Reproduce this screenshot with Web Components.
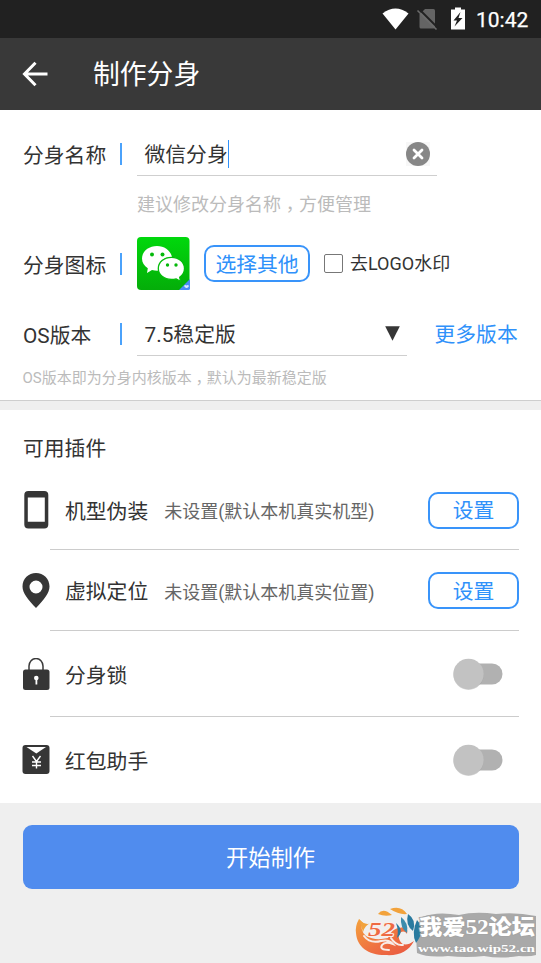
<!DOCTYPE html>
<html lang="zh-CN">
<head>
<meta charset="utf-8">
<title>制作分身</title>
<style>
html,body{margin:0;padding:0}
body{width:541px;height:963px;overflow:hidden;background:#efefef;color:#333;font-family:Roboto,"Noto Sans CJK SC",sans-serif;font-size:20.8px;line-height:1}
</style>
</head>
<body>
<clone-page></clone-page>
<script>
const define = (name, css, html) => customElements.define(name, class extends HTMLElement {
  constructor() {
    super();
    this.attachShadow({mode: 'open'}).innerHTML = `<style>*{box-sizing:border-box}svg{display:block;flex:none}:host{box-sizing:border-box;white-space:nowrap}${css}</style>${html}`;
  }
});

define('status-bar', `
:host{display:flex;height:38px;background:#212121;color:#fff;align-items:center;justify-content:flex-end;padding:0 12px 0 0}
.time{width:53px;height:22px;line-height:24px;margin-left:11px;font-size:21px;-webkit-text-stroke:.25px #fff}`, `
<svg width="84" height="38" viewBox="381 0 84 38">
<path d="M382.500 13.500Q395.500 3.500 408.500 13.500L395.500 29.500Z" fill="#fff"/>
<path d="M425 9h8.500q1.500 0 1.500 1.500V27q0 1.500-1.500 1.500H421q-1.500 0-1.500-1.500V14.500Z" fill="#646464"/>
<path d="M419.500 9.500 438 28" stroke="#212121" stroke-width="1.800"/>
<path d="M417.500 10.500 436.500 29.500" stroke="#6b6b6b" stroke-width="1.600"/>
<path d="M455 7.500h6v2h4V29.500h-14V9.500h4Z" fill="#fff"/>
<path d="M460.500 12 453.500 20.500h3.500L454.500 26.500 462.500 18h-4Z" fill="#212121"/></svg>
<span class="time">10:42</span>`);

define('title-bar', `
:host{display:flex;height:72px;background:#393939;color:#fff;align-items:center;padding-left:22px;font-size:26.8px}
span{margin-left:45px;padding-top:3px}`, `
<svg width="26" height="28" viewBox="0 0 26 28"><path d="M13.500 2.800 2.500 14 13.500 25.200M2.500 14H25.500" fill="none" stroke="#fff" stroke-width="3"/></svg>
<span><slot></slot></span>`);

define('form-row', `
:host{display:flex;align-items:center;padding-left:23px;height:44px}
.label{width:97px;padding-top:2px;height:24px;line-height:24px}
i{width:2px;height:22px;background:#4ba2fb;margin-right:15px}`, `
<span class="label"><slot name="label"></slot></span><i></i><slot></slot>`);

define('line-field', `
:host{display:flex;align-items:center;height:44px;border-bottom:1px solid #cfcfcf;padding:0 7px 0 7.500px;width:300px}
:host([narrow]){width:270px}
.grow{flex:1;display:flex;align-items:center}
:host([narrow]) .grow{padding-top:3px}`, `<span class="grow"><slot></slot></span><slot name="end"></slot>`);

define('text-caret', `:host{width:1.500px;height:28px;background:#2f91fa;display:inline-block}`, ``);

define('clear-icon', `:host{display:block}`, `
<svg width="24" height="24" viewBox="0 0 24 24"><path fill="#f7f7f7" d="M0 0h24v24H0z"/><circle cx="12" cy="12" r="12" fill="#878787"/><path d="m8 8 8 8m0-8-8 8" stroke="#fff" stroke-width="2.800" stroke-linecap="round"/></svg>`);

define('drop-arrow', `:host{display:block}`, `<svg width="15" height="15" viewBox="0 0 15 15"><path d="M.2.300h14.600L7.500 14.700Z" fill="#363636"/></svg>`);

define('hint-text', `:host{display:flex;align-items:center;color:#bbb;font-size:18px}`, `<span><slot></slot></span>`);
define('mid-comma', `:host{display:inline;font-family:"Noto Sans CJK TC",sans-serif;position:relative;top:.3em}`, `<slot></slot>`);

define('wechat-icon', `:host{display:block;width:53px;height:53px}`, `
<svg width="53" height="53" viewBox="0 0 53 53">
<defs><linearGradient id="g" x2="0" y2="1"><stop stop-color="#00d80c"/><stop offset="1" stop-color="#04ad09"/></linearGradient></defs>
<rect width="52.500" height="53" rx="4" fill="url(#g)"/>
<path d="M20 9C11.500 9 5 14.500 5 21.500c0 4 2.200 7.400 5.800 9.800L10 36l5-3c2.500.6 4.500.900 7.500.600A13 13 0 0 1 22 30c0-6 5.500-10 13-10C33.500 13.500 27.500 9 20 9Z" fill="#fff"/>
<circle cx="15" cy="17.500" r="2" fill="#04b90a"/><circle cx="25.500" cy="17.500" r="2" fill="#04b90a"/>
<path d="M34.500 20.300C27 20.300 21.300 25.200 21.300 31.500S27 42.500 34.500 42.500c1.700 0 3.300-.200 4.700-.600l4.300 2.300-.800-4c3-2 4.800-5.200 4.800-8.700 0-6.300-5.700-11.200-13-11.200Z" fill="#fff" stroke="#04bd0a" stroke-width="1.300"/>
<circle cx="30.500" cy="28" r="1.700" fill="#04b90a"/><circle cx="39" cy="28" r="1.700" fill="#04b90a"/>
<path d="M42 53 53 42v9.500Q53 53 51.500 53Z" fill="#4a8cf5"/><path d="M47 48.700q1.500-1.300 2.500-.3 1.500-1.200 2.500.6-1 2.300-2.700 2-1.700-.2-2.300-2.300Z" fill="#d8e6ff"/></svg>`);

define('outline-button', `
:host{display:flex;align-items:center;justify-content:center;width:91px;height:37px;border:2px solid #3994fa;border-radius:10px;color:#2f91fa;flex:none}
:host([wide]){width:106px}
span{padding-top:3px}`, `<span><slot></slot></span>`);

define('check-option', `
:host{display:flex;align-items:center;font-size:18px;height:24px}
b{width:19px;height:19px;border:1.500px solid #777;border-radius:2px;margin-right:7px}`, `<b></b><span><slot></slot></span>`);

define('plugin-row', `
:host{display:flex;height:86px;align-items:center;padding:0 22px;position:relative}
:host([compact]){height:81px}
:host([first]){height:80px}
:host([line])::after{content:"";position:absolute;left:50px;right:22px;bottom:0;height:1px;background:#ccc}
.icon{width:28px;display:flex;justify-content:center;margin-right:15px}
.name{padding-top:4px}
.note{font-size:18px;color:#666;margin-left:16px;padding-top:4px;flex:1}`, `
<span class="icon"><slot name="icon"></slot></span><span class="name"><slot name="name"></slot></span><span class="note"><slot name="note"></slot></span><slot name="control"></slot>`);

define('phone-icon', `:host{display:block}`, `<svg width="26" height="38" viewBox="-1.300 0 26 38"><path fill-rule="evenodd" d="M4 0h16q4 0 4 4v29.500q0 4-4 4H4q-4 0-4-4V4Q0 0 4 0ZM3.500 6.500v24.300h17V6.500Z" fill="#363636"/></svg>`);
define('pin-icon', `:host{display:block}`, `<svg width="28" height="36" viewBox="0 0.500 28 36"><path fill-rule="evenodd" d="M14 .5C6.500.5.500 6.200.500 14c0 6.500 5.500 13 13.500 21.500C22 27 27.500 20.500 27.500 14 27.500 6.200 21.500.5 14 .5ZM14 8a6.500 6.500 0 1 1 0 13 6.500 6.500 0 0 1 0-13Z" fill="#363636"/></svg>`);
define('lock-icon', `:host{display:block}`, `<svg width="28" height="33" viewBox="0 0.500 28 33"><path d="M7 14V8.500a7 7.500 0 0 1 14 0V14" fill="none" stroke="#3a3a3a" stroke-width="1.500"/><rect x="1" y="12" width="26.500" height="20.500" rx="2.500" fill="#363636"/><circle cx="14.300" cy="20.500" r="2.300" fill="#fff"/><path d="M13.500 21h1.800v6h-1.800z" fill="#fff"/></svg>`);
define('packet-icon', `:host{display:block}`, `<svg width="28" height="31" viewBox="0 0 28 31"><rect x=".5" width="27" height="29" rx="3" fill="#363636"/><path d="M4.500 2h19.500L14.300 8.500Z" fill="#fff"/><path d="m10.500 11 4 5.500 4-5.500M10 17h9M10 20.500h9M14.500 16v7.500" fill="none" stroke="#fff" stroke-width="1.400"/></svg>`);

define('toggle-switch', `
:host{display:block;width:50px;height:34px;margin-right:16.500px}
svg{overflow:visible}`, `
<svg width="50" height="34" viewBox="0 0 50 34"><rect x="10" y="6.500" width="39.500" height="21" rx="10.500" fill="#b1b1b1"/><circle cx="15.500" cy="18" r="15" fill="#888" opacity=".35"/><circle cx="15.500" cy="17" r="15.200" fill="#c2c2c2"/></svg>`);

define('forum-mark', `
:host{position:absolute;left:354px;top:903px;width:187px;height:60px}
text{paint-order:stroke;stroke:#a5a5a5;stroke-linejoin:round;fill:#fff}`, `
<svg width="187" height="60" viewBox="0 0 187 60">
<defs><linearGradient id="o" x2="1" y2="1"><stop stop-color="#f4a23c"/><stop offset=".55" stop-color="#ef7141"/><stop offset="1" stop-color="#e85541"/></linearGradient></defs>
<path d="M68 14q15-6 37-2 16-4 37-1 20-2 40 2v39q-6 2-17 1-18 3-35 0-17 2-36 0-20 2-31-3l-1-17 7-5Z" fill="#a9a9a9"/>
<path d="M5 16Q1 23 2 30C3 44 14 52 31 52C45 53 54 49 60 38Q50 45 46 38C42 31 49 25 53 31Q55 22 45 25C38 26 36 31 34 35Q21 38 12 33Q5 26 9 20Z" fill="url(#o)"/>
<path d="M10 33Q16 41 27 38 35 36 39 41 31 38 28 42 25 47 35 47M37 35Q42 43 49 42" fill="none" stroke="#f8ece8" stroke-width="2" stroke-linecap="round"/>
<path d="M24 11Q29 4 38 12 31 14 24 11ZM36 6Q47 2 53 11 45 12 36 6ZM5 16Q11 23 17 20 11 22 9 29Z" fill="#f2a23b"/>
<path d="M54 11Q63 17 59 28 51 22 54 11ZM63 17Q72 27 62 40 57 30 63 17ZM42 20Q51 28 43 35 45 28 42 20Z" fill="#297a9f"/>
<path d="M47 14Q55 20 53 30 46 25 47 14Z" fill="#3c8cad"/>
<text x="14" y="33" font-family="Liberation Serif" font-size="19" font-weight="700" font-style="italic" textLength="27" lengthAdjust="spacingAndGlyphs" style="fill:#ee6a42;stroke:#fbeee9;stroke-width:1.800">52</text>
<text x="65" y="31" font-family="Liberation Serif,Noto Sans CJK SC,serif" font-size="21" font-weight="900" textLength="116" lengthAdjust="spacingAndGlyphs" stroke-width="2">我爱52论坛</text>
<text x="64" y="48.500" font-family="Liberation Serif,serif" font-size="11" font-weight="700" textLength="117" lengthAdjust="spacingAndGlyphs" stroke-width="1">www.tao.wip52.cn</text></svg>`);

define('primary-button', `
:host{display:flex;align-items:center;justify-content:center;height:63.500px;margin:22px 22.500px 0;background:#508cee;border-radius:9px;color:#fff;font-size:22.300px}
span{padding-top:2px}`, `<span><slot></slot></span>`);

define('clone-page', `
:host{display:block;width:541px;height:963px;position:relative;background:#efefef}
section{background:#fff}
.form{height:291px;padding-top:22px;border-bottom:1px solid #cecece}
.field-value{padding-top:3px}
.name-hint{height:54px;padding:1px 0 0 137px}
.icon-row{height:67px;align-items:center}
.os-hint{height:43px;padding-left:22.500px;font-size:15px}
.plugins{margin-top:9px;height:393px}
h2{margin:0;height:60px;padding:29px 0 0 23px;font-size:20.800px;font-weight:400}
outline-button[wide]{margin:0 14px}
.more{color:#2f91fa;margin-left:27.500px;padding-top:3px}`, `
<status-bar></status-bar>
<title-bar>制作分身</title-bar>
<section class="form">
<form-row><span slot="label">分身名称</span><line-field><span class="field-value">微信分身</span><text-caret></text-caret><clear-icon slot="end"></clear-icon></line-field></form-row>
<hint-text class="name-hint">建议修改分身名称<mid-comma lang="zh-TW">，</mid-comma>方便管理</hint-text>
<form-row class="icon-row"><span slot="label">分身图标</span><wechat-icon></wechat-icon><outline-button wide>选择其他</outline-button><check-option>去LOGO水印</check-option></form-row>
<form-row style="margin-top:15px"><span slot="label">OS版本</span><line-field narrow>7.5稳定版<drop-arrow slot="end"></drop-arrow></line-field><span class="more">更多版本</span></form-row>
<hint-text class="os-hint">OS版本即为分身内核版本<mid-comma lang="zh-TW">，</mid-comma>默认为最新稳定版</hint-text>
</section>
<section class="plugins">
<h2>可用插件</h2>
<plugin-row first line><phone-icon slot="icon"></phone-icon><span slot="name">机型伪装</span><span slot="note">未设置(默认本机真实机型)</span><outline-button slot="control">设置</outline-button></plugin-row>
<plugin-row compact line><pin-icon slot="icon"></pin-icon><span slot="name">虚拟定位</span><span slot="note">未设置(默认本机真实位置)</span><outline-button slot="control">设置</outline-button></plugin-row>
<plugin-row line><lock-icon slot="icon"></lock-icon><span slot="name">分身锁</span><toggle-switch slot="control"></toggle-switch></plugin-row>
<plugin-row><packet-icon slot="icon"></packet-icon><span slot="name">红包助手</span><toggle-switch slot="control"></toggle-switch></plugin-row>
</section>
<primary-button>开始制作</primary-button>
<forum-mark></forum-mark>`);
</script>
</body>
</html>
